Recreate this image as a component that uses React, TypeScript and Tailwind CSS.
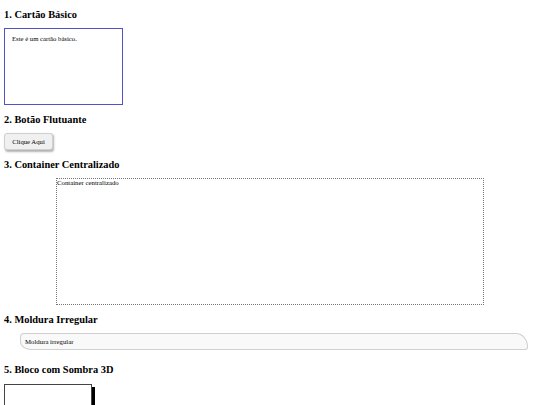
const heading = "font-bold text-[10.4px] leading-[11px] text-black";

export default function App() {
  return (
    <div className="min-h-[405px] w-[540px] overflow-hidden bg-white px-[4px] font-['Liberation_Serif','Times_New_Roman',serif] text-black">
      <h3 className={`${heading} mt-[9px]`}>1. Cartão Básico</h3>
      <div className="mt-[8px] h-[77px] w-[119px] border border-[#5252c8] px-[7px] pt-[6px] text-[6.7px] leading-[8px]">
        Este é um cartão básico.
      </div>

      <h3 className={`${heading} mt-[8.5px]`}>2. Botão Flutuante</h3>
      <button className="mt-[8.5px] flex h-[17px] w-[49px] items-center justify-center rounded-[3px] border border-[#d0d0d0] bg-[#f0f0f0] text-[6.7px] leading-[8px] shadow-[1px_1.5px_2px_rgba(0,0,0,0.3)]">
        Clique Aqui
      </button>

      <h3 className={`${heading} mt-[8.5px]`}>3. Container Centralizado</h3>
      <div className="mx-auto mt-[8.5px] h-[127px] w-[428px] border border-dotted border-[#777] text-[6.8px] leading-[7px]">
        Container centralizado
      </div>

      <h3 className={`${heading} mt-[8.5px]`}>4. Moldura Irregular</h3>
      <div className="ml-[16px] mr-[8px] mt-[8.5px] flex h-[17px] items-center border border-[#cfcfcf] bg-[#f9f9f9] pl-[4px] text-[6.8px] leading-[7px] [border-radius:4px_12px_3px_12px/4px_14px_3px_8px]">
        Moldura irregular
      </div>

      <h3 className={`${heading} mt-[14px]`}>5. Bloco com Sombra 3D</h3>
      <div className="mt-[9px] h-[40px] w-[88px] border-[1.5px] border-[#444] bg-white shadow-[3px_3px_0_#000]" />
    </div>
  );
}
